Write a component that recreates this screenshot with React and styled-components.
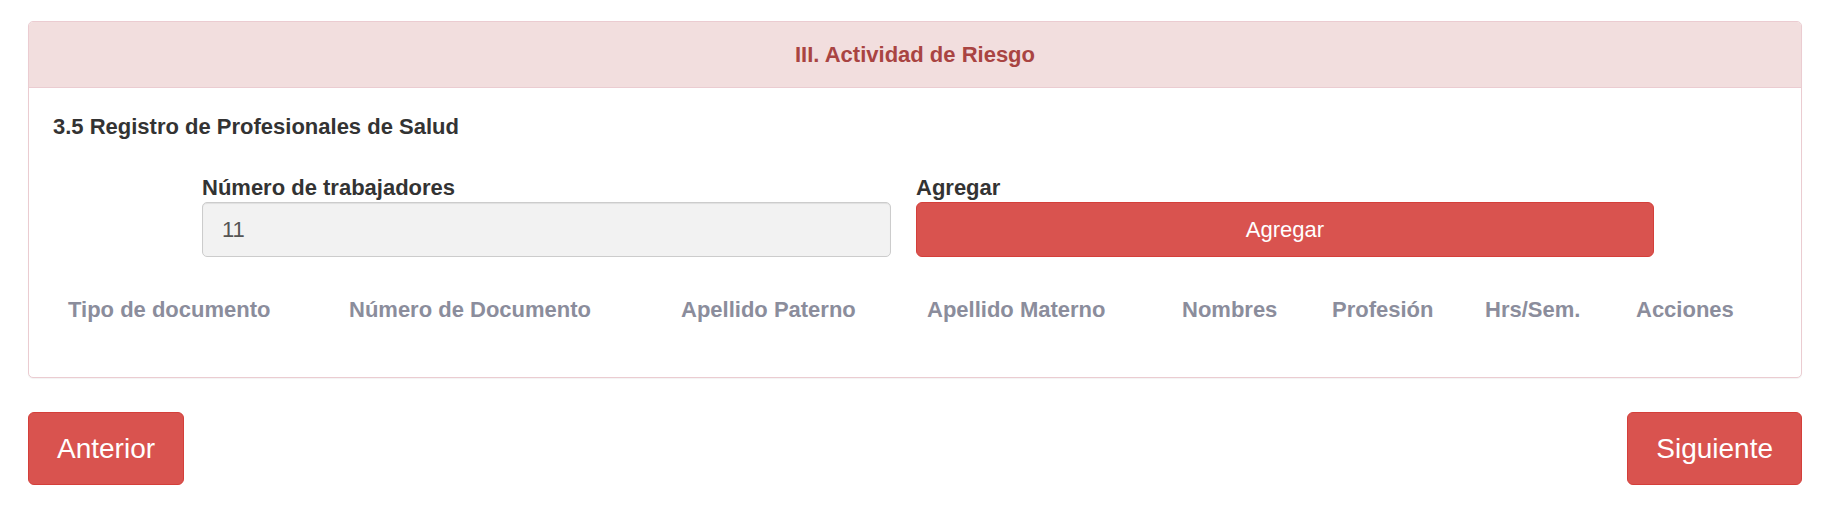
import React from 'react';
import styled, { createGlobalStyle } from 'styled-components';

const GlobalStyle = createGlobalStyle`
  body {
    margin: 0;
    background: #fff;
    font-family: "Liberation Sans", Arial, Helvetica, sans-serif;
    color: #333;
  }
`;

const Page = styled.div`
  padding: 21px 44px 0 28px;
`;

const Panel = styled.div`
  border: 1px solid #ebccd1;
  border-radius: 5px;
  background: #fff;
  box-shadow: 0 1px 1px rgba(0, 0, 0, 0.05);
  overflow: hidden;
`;

const PanelHeading = styled.div`
  height: 65px;
  display: flex;
  align-items: center;
  justify-content: center;
  background: #f2dede;
  border-bottom: 1px solid #ebccd1;
  color: #a94442;
  font-size: 22px;
  font-weight: bold;
`;

const PanelBody = styled.div`
  padding: 26px 24px 54px 24px;
`;

const SectionTitle = styled.h4`
  margin: 0;
  font-size: 22px;
  line-height: 26px;
  font-weight: bold;
  color: #333;
`;

const FormRow = styled.div`
  display: grid;
  grid-template-columns: 689px 738px;
  column-gap: 25px;
  padding-left: 149px;
  margin-top: 35px;
`;

const Field = styled.div`
  display: flex;
  flex-direction: column;
`;

const Label = styled.label`
  font-size: 22px;
  line-height: 26px;
  font-weight: bold;
  color: #333;
  margin-bottom: 1px;
`;

const Input = styled.input`
  box-sizing: border-box;
  height: 55px;
  padding: 0 19px;
  border: 1px solid #ccc;
  border-radius: 5px;
  background: #f2f2f2;
  color: #555;
  font-family: inherit;
  font-size: 22px;
  box-shadow: inset 0 1px 1px rgba(0, 0, 0, 0.075);
  outline: none;
`;

const Button = styled.button`
  box-sizing: border-box;
  height: ${(p) => (p.big ? '73px' : '55px')};
  padding: 0 ${(p) => (p.big ? '28px' : '12px')};
  border: 1px solid #d43f3a;
  border-radius: 6px;
  background: #d9534f;
  color: #fff;
  font-family: inherit;
  font-size: ${(p) => (p.big ? '28px' : '22px')};
  cursor: pointer;
`;

const TableHead = styled.div`
  display: grid;
  grid-template-columns: 281px 332px 246px 255px 150px 153px 151px auto;
  padding-left: 15px;
  margin-top: 40px;
`;

const HeadCell = styled.div`
  font-size: 22px;
  line-height: 26px;
  font-weight: bold;
  color: #8b8d9c;
  white-space: nowrap;
`;

const Footer = styled.div`
  display: flex;
  justify-content: space-between;
  margin-top: 34px;
`;

const columns = [
  'Tipo de documento',
  'Número de Documento',
  'Apellido Paterno',
  'Apellido Materno',
  'Nombres',
  'Profesión',
  'Hrs/Sem.',
  'Acciones',
];

function App() {
  return (
    <Page>
      <GlobalStyle />
      <Panel>
        <PanelHeading>III. Actividad de Riesgo</PanelHeading>
        <PanelBody>
          <SectionTitle>3.5 Registro de Profesionales de Salud</SectionTitle>
          <FormRow>
            <Field>
              <Label>Número de trabajadores</Label>
              <Input type="text" value="11" readOnly />
            </Field>
            <Field>
              <Label>Agregar</Label>
              <Button>Agregar</Button>
            </Field>
          </FormRow>
          <TableHead>
            {columns.map((col) => (
              <HeadCell key={col}>{col}</HeadCell>
            ))}
          </TableHead>
        </PanelBody>
      </Panel>
      <Footer>
        <Button big>Anterior</Button>
        <Button big>Siguiente</Button>
      </Footer>
    </Page>
  );
}

export default App;
